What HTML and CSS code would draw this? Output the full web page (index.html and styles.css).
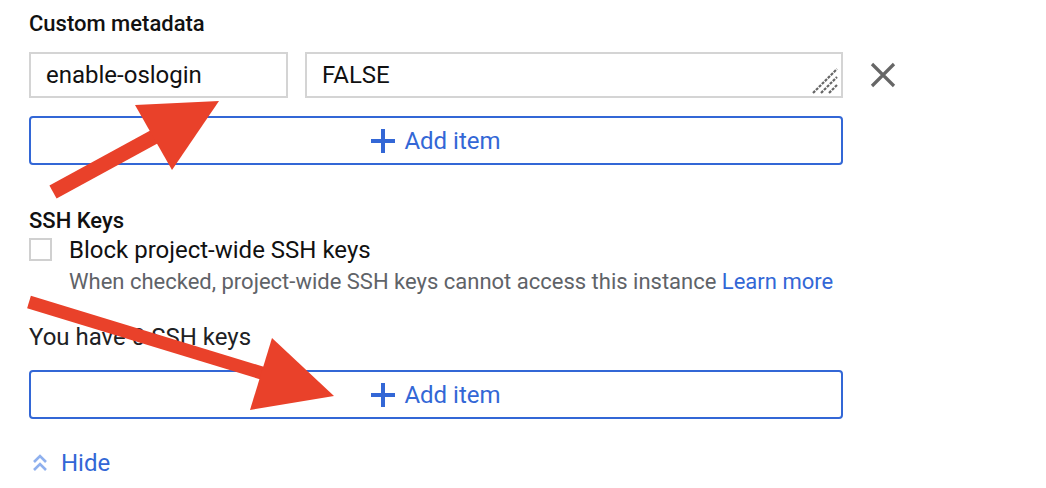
FILE: index.html
```html
<!DOCTYPE html>
<html>
<head>
<meta charset="utf-8">
<link rel="stylesheet" href="styles.css">
</head>
<body>
<div class="page">
  <div class="section-title first">Custom metadata</div>
  <div class="meta-row">
    <div class="field key">enable-oslogin</div>
    <div class="field value">FALSE
      <svg class="resize" width="28" height="28" viewBox="0 0 28 28">
        <path d="M2 26 L26 2 M10 26 L26 10 M18 26 L26 18" stroke="#666" stroke-width="2.2" stroke-dasharray="3 1.2" fill="none"/>
      </svg>
    </div>
    <svg class="close" width="26" height="26" viewBox="0 0 26 26">
      <path d="M2 2 L24 24 M24 2 L2 24" stroke="#666" stroke-width="3.2" fill="none"/>
    </svg>
  </div>
  <div class="add-btn first-btn">
    <svg class="plus" width="24" height="24" viewBox="0 0 24 24"><path d="M12 0 V24 M0 12 H24" stroke="#3367d6" stroke-width="4" fill="none"/></svg>
    <span>Add item</span>
  </div>

  <div class="section-title ssh">SSH Keys</div>
  <div class="check-row">
    <span class="checkbox"></span>
    <span class="check-label">Block project-wide SSH keys</span>
  </div>
  <div class="hint">When checked, project-wide SSH keys cannot access this instance <span class="link">Learn more</span></div>
  <div class="count">You have 0 SSH keys</div>
  <div class="add-btn second-btn">
    <svg class="plus" width="24" height="24" viewBox="0 0 24 24"><path d="M12 0 V24 M0 12 H24" stroke="#3367d6" stroke-width="4" fill="none"/></svg>
    <span>Add item</span>
  </div>
  <div class="hide">
    <svg class="chev" width="16" height="20" viewBox="0 0 16 20"><path d="M2 9 L8 3 L14 9 M2 17 L8 11 L14 17" stroke="#8fb0ee" stroke-width="2.6" fill="none"/></svg>
    <span>Hide</span>
  </div>

  <svg class="annot" width="1046" height="488" viewBox="0 0 1046 488">
    <line x1="53" y1="192" x2="163" y2="132" stroke="#e9412a" stroke-width="15"/>
    <polygon points="135,105 219,101 172,170" fill="#e9412a"/>
    <line x1="29" y1="302" x2="265" y2="374" stroke="#e9412a" stroke-width="13"/>
    <polygon points="272,338 334,396 250,410" fill="#e9412a"/>
  </svg>
</div>
</body>
</html>
```

FILE: styles.css
```css
html, body {
  margin: 0;
  padding: 0;
  background: #ffffff;
}
.page {
  position: relative;
  width: 1046px;
  height: 488px;
  overflow: hidden;
  padding: 12px 0 0 29px;
  box-sizing: border-box;
  font-family: Roboto, "Noto Sans", sans-serif;
  color: #202124;
}
.section-title {
  font-size: 22px;
  font-weight: 500;
  line-height: 24px;
  color: #111;
}
.ssh {
  margin-top: 44px;
}
.meta-row {
  margin-top: 16px;
  display: flex;
  align-items: center;
  gap: 17px;
}
.field {
  height: 46px;
  box-sizing: border-box;
  border: 2px solid #d4d4d4;
  font-size: 24px;
  line-height: 42px;
  padding-left: 15px;
  color: #111;
}
.key {
  width: 259px;
}
.value {
  width: 538px;
  position: relative;
}
.resize {
  position: absolute;
  right: 2px;
  bottom: 1px;
}
.close {
  margin-left: 10px;
}
.add-btn {
  width: 814px;
  height: 49px;
  box-sizing: border-box;
  border: 2px solid #3367d6;
  border-radius: 4px;
  display: flex;
  align-items: center;
  justify-content: center;
  gap: 9px;
  color: #3367d6;
  font-size: 24px;
}
.first-btn {
  margin-top: 18px;
}
.second-btn {
  margin-top: 20px;
}
.check-row {
  margin-top: 4px;
  display: flex;
  align-items: flex-start;
  gap: 17px;
}
.checkbox {
  margin-top: 1px;
  width: 23px;
  height: 23px;
  box-sizing: border-box;
  border: 2px solid #d0d0d0;
}
.check-label {
  font-size: 24px;
  line-height: 26px;
  color: #111;
}
.hint {
  margin-top: 7px;
  margin-left: 40px;
  font-size: 22px;
  line-height: 24px;
  color: #5f6368;
}
.link {
  color: #3367d6;
}
.count {
  margin-top: 30px;
  font-size: 24px;
  line-height: 26px;
  color: #202124;
}
.hide {
  margin-top: 31px;
  display: flex;
  align-items: center;
  gap: 13px;
  padding-left: 3px;
  color: #3367d6;
  font-size: 24px;
  line-height: 26px;
}
.annot {
  position: absolute;
  left: 0;
  top: 0;
  pointer-events: none;
}
```
